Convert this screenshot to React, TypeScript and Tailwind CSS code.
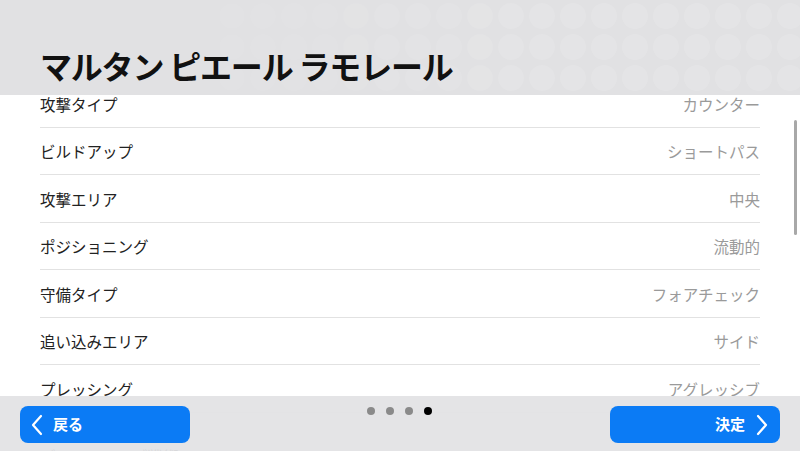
const rows = [
	['攻撃タイプ', 'カウンター'],
	['ビルドアップ', 'ショートパス'],
	['攻撃エリア', '中央'],
	['ポジショニング', '流動的'],
	['守備タイプ', 'フォアチェック'],
	['追い込みエリア', 'サイド'],
	['プレッシング', 'アグレッシブ'],
];

const font = { fontFamily: '"Noto Sans CJK JP", "Noto Sans", sans-serif' };

function DotPattern() {
	const circles = [];
	for (let r = 0; r < 3; r++) {
		for (let c = 0; c < 26; c++) {
			const cx = 15 + c * 31;
			const fade = Math.min(1, Math.max(0.1, (cx - 100) / 500));
			circles.push(<circle key={`${r}-${c}`} cx={cx} cy={16 + r * 31} r={13} fill="#fff" opacity={0.13 * fade} />);
		}
	}
	return (
		<svg className="absolute inset-0" width="800" height="95">
			{circles}
		</svg>
	);
}

function Chevron({ dir }: { dir: 'left' | 'right' }) {
	return (
		<svg width="12" height="22" viewBox="0 0 12 22" fill="none" stroke="white" strokeWidth="2.2" strokeLinecap="round" strokeLinejoin="round">
			<path d={dir === 'left' ? 'M10 2 L2 11 L10 20' : 'M2 2 L10 11 L2 20'} />
		</svg>
	);
}

export default function App() {
	return (
		<div className="relative flex h-[451px] w-[800px] flex-col overflow-hidden bg-white" style={font}>
			<header className="relative h-[95px] shrink-0 overflow-hidden bg-[#e1e1e3]">
				<DotPattern />
				<h1 className="relative pl-[40px] pt-[43px] text-[32px] font-bold leading-[44px] tracking-[-1.2px] text-[#111]">
					マルタン ピエール ラモレール
				</h1>
			</header>

			<div className="relative flex-1 overflow-hidden">
				<div className="-mt-[15px] px-[40px]">
					{rows.map(([label, value]) => (
						<div key={label} className="flex h-[47.5px] items-center justify-between border-b border-[#e2e2e2] pt-[2px] text-[15.5px]">
							<span className="text-[#222]">{label}</span>
							<span className="text-[#9a9a9a]">{value}</span>
						</div>
					))}
					<div className="pt-[32px] text-[15.5px] text-[#222]">ディフェンシブ戦術</div>
				</div>
				<div className="absolute right-[3px] top-[25px] h-[115px] w-[3px] rounded-full bg-[#a8a8a8]" />
			</div>

			<div className="absolute bottom-0 left-0 right-0 flex h-[55px] items-start justify-between bg-[#e3e3e5]/95 px-[20px] pt-[10px]">
				<button className="flex h-[37px] w-[170px] items-center gap-[10px] rounded-[8px] bg-[#0b7bf5] pl-[11px] text-[15px] font-bold text-white">
					<Chevron dir="left" />
					<span>戻る</span>
				</button>
				<div className="-ml-[2px] flex gap-[11px] pt-[1px]">
					<span className="h-[8px] w-[8px] rounded-full bg-[#8a8a8a]" />
					<span className="h-[8px] w-[8px] rounded-full bg-[#8a8a8a]" />
					<span className="h-[8px] w-[8px] rounded-full bg-[#8a8a8a]" />
					<span className="h-[8px] w-[8px] rounded-full bg-black" />
				</div>
				<button className="flex h-[37px] w-[170px] items-center justify-end gap-[11px] rounded-[8px] bg-[#0b7bf5] pr-[12px] text-[15px] font-bold text-white">
					<span>決定</span>
					<Chevron dir="right" />
				</button>
			</div>
		</div>
	);
}
